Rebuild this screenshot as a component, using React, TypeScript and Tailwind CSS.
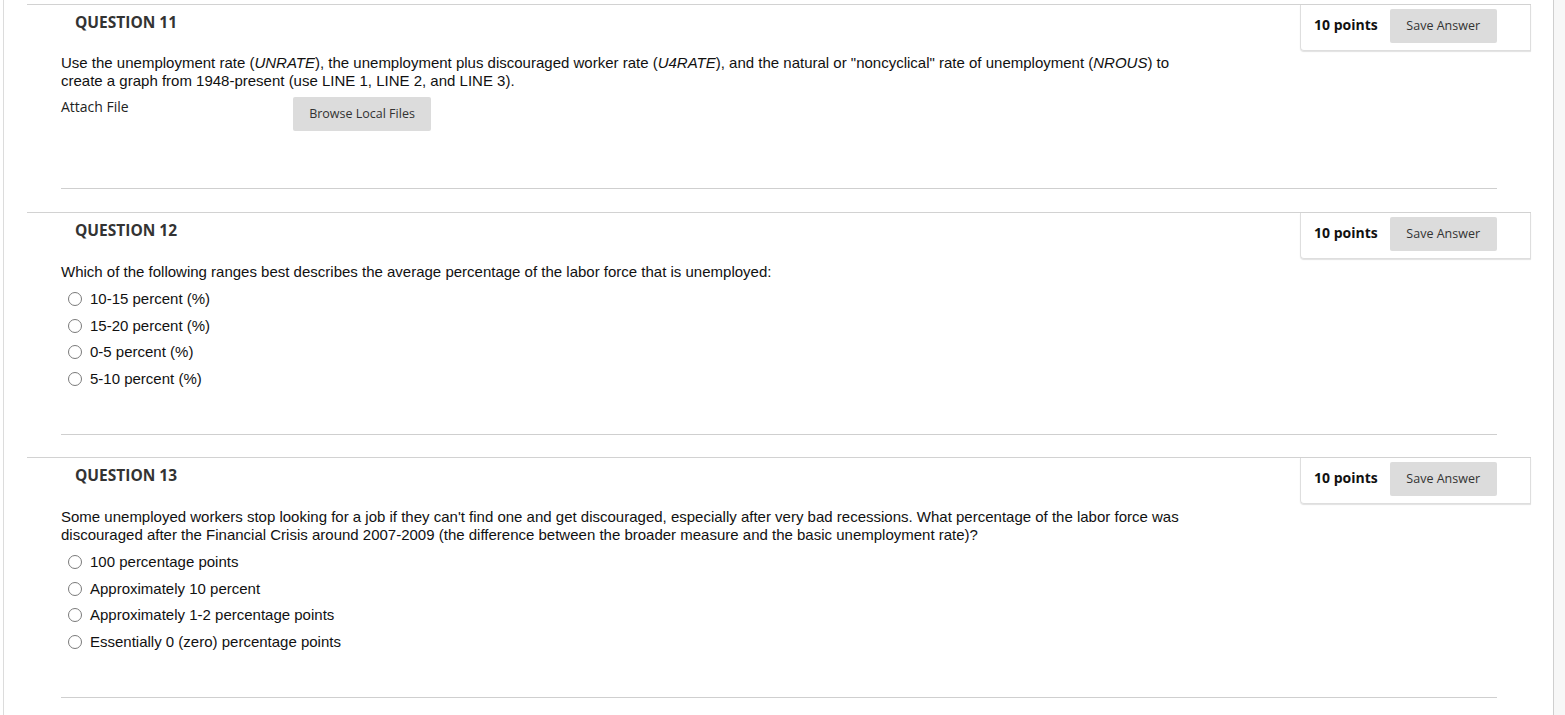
import React from 'react';

type Option = string;

const body = { fontFamily: '"Liberation Sans", Arial, sans-serif' };
const open = { fontFamily: '"Open Sans", "Noto Sans", sans-serif' };

function PointsBox() {
  return (
    <div
      className="flex h-[46px] w-[231px] shrink-0 items-start border border-t-0 border-[#dedede] rounded-bl-[4px] pl-[13px] pt-[4px] shadow-[0_1px_1px_rgba(0,0,0,0.12)]"
      style={open}
    >
      <span className="text-[14px] font-bold leading-[32px] text-[#111]">10 points</span>
      <button className="ml-[12px] h-[34px] w-[107px] rounded-[2px] bg-[#dcdcdc] text-[12.5px] text-[#333]">
        Save Answer
      </button>
    </div>
  );
}

function Radio({ label }: { label: Option }) {
  return (
    <div className="flex h-[26.67px] items-center">
      <span className="ml-[7px] h-[14px] w-[14px] rounded-full border border-[#7a7a7a] bg-white" />
      <span className="ml-[8px] text-[15px] leading-[18px] text-[#111]" style={body}>
        {label}
      </span>
    </div>
  );
}

function Question({
  num,
  children,
  gap,
  top,
}: {
  num: number;
  children: React.ReactNode;
  gap: number;
  top: number;
}) {
  return (
    <div className="ml-[23px] mr-[22px] border-t border-[#d2d2d2]">
      <div className="flex justify-between">
        <div className="pl-[48px] pt-[6px] text-[15.5px] font-bold leading-[22px] text-[#333]" style={open}>
          QUESTION {num}
        </div>
        <PointsBox />
      </div>
      <div className="ml-[34px] mr-[34px]" style={{ marginTop: top }}>
        {children}
        <div style={{ height: gap }} />
        <div className="h-px bg-[#cfcfcf]" />
      </div>
    </div>
  );
}

export default function App() {
  return (
    <div className="flex h-[715px] w-full bg-white">
      <div className="w-[3px] shrink-0 bg-white" />
      <div className="flex-1 border-l border-[#dcdcdc] pt-[4px]">
        <Question num={11} gap={57} top={3}>
          <p className="max-w-[1130px] text-[15px] leading-[18px] text-[#111]" style={body}>
            Use the unemployment rate (<i>UNRATE</i>), the unemployment plus discouraged worker rate (<i>U4RATE</i>), and
            the natural or "noncyclical" rate of unemployment (<i>NROUS</i>) to create a graph from 1948-present (use
            LINE 1, LINE 2, and LINE 3).
          </p>
          <div className="mt-[7px] flex">
            <div className="w-[232px] text-[14px] leading-[20px] text-[#222]" style={open}>
              Attach File
            </div>
            <button
              className="h-[34px] w-[138px] rounded-[2px] bg-[#dcdcdc] text-[12.5px] text-[#333]"
              style={open}
            >
              Browse Local Files
            </button>
          </div>
        </Question>
        <div className="h-[23px]" />
        <Question num={12} gap={41.67} top={4}>
          <p className="text-[15px] leading-[18px] text-[#111]" style={body}>
            Which of the following ranges best describes the average percentage of the labor force that is unemployed:
          </p>
          <div className="mt-[4.67px]">
            {['10-15 percent (%)', '15-20 percent (%)', '0-5 percent (%)', '5-10 percent (%)'].map((o) => (
              <Radio key={o} label={o} />
            ))}
          </div>
        </Question>
        <div className="h-[22px]" />
        <Question num={13} gap={41.67} top={4}>
          <p className="max-w-[1130px] text-[15px] leading-[18px] text-[#111]" style={body}>
            Some unemployed workers stop looking for a job if they can't find one and get discouraged, especially after
            very bad recessions. What percentage of the labor force was discouraged after the Financial Crisis around
            2007-2009 (the difference between the broader measure and the basic unemployment rate)?
          </p>
          <div className="mt-[4.67px]">
            {[
              '100 percentage points',
              'Approximately 10 percent',
              'Approximately 1-2 percentage points',
              'Essentially 0 (zero) percentage points',
            ].map((o) => (
              <Radio key={o} label={o} />
            ))}
          </div>
        </Question>
      </div>
      <div className="w-[12px] shrink-0 border-l border-[#cfcfcf] bg-[#f7f7f7]" />
    </div>
  );
}
